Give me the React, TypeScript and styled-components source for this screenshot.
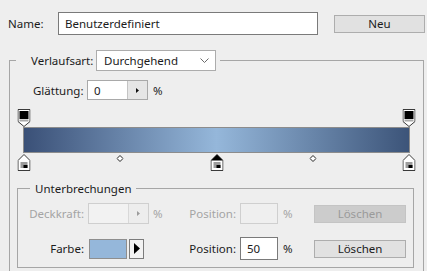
import React from 'react';
import styled, { createGlobalStyle } from 'styled-components';

const GlobalStyle = createGlobalStyle`
  html, body {
    margin: 0;
    padding: 0;
  }
  body {
    width: 427px;
    height: 271px;
    overflow: hidden;
    background: #eeeeee;
    font-family: 'Noto Sans', 'Open Sans', sans-serif;
    font-size: 11.5px;
    color: #1b1b1b;
  }
`;

const opacityStops = [0, 1];
const colorStops = [
  { pos: 0, selected: false },
  { pos: 0.5, selected: true },
  { pos: 1, selected: false },
];
const midpoints = [0.25, 0.75];

const Page = styled.div`
  padding-top: 12px;
`;

const NameRow = styled.div`
  display: flex;
  align-items: center;
  height: 23px;
  padding-left: 8px;
`;

const NameLabel = styled.span`
  width: 50px;
`;

const TextBox = styled.div<{ $width: number; $height?: number; $disabled?: boolean }>`
  box-sizing: border-box;
  display: flex;
  align-items: center;
  width: ${(p) => p.$width}px;
  height: ${(p) => p.$height ?? 23}px;
  padding-left: 6px;
  background: ${(p) => (p.$disabled ? '#efefef' : '#ffffff')};
  border: 1px solid ${(p) => (p.$disabled ? '#cfcfcf' : '#7a7a7a')};
`;

const Button = styled.div<{ $width: number; $disabled?: boolean }>`
  box-sizing: border-box;
  display: flex;
  align-items: center;
  justify-content: center;
  width: ${(p) => p.$width}px;
  height: 18px;
  background: ${(p) => (p.$disabled ? '#cccccc' : '#e1e1e1')};
  border: 1px solid ${(p) => (p.$disabled ? '#c4c4c4' : '#adadad')};
  color: ${(p) => (p.$disabled ? '#9a9a9a' : '#1b1b1b')};
`;

const NewButton = styled(Button)`
  margin-left: 16px;
`;

const OuterGroup = styled.fieldset`
  box-sizing: border-box;
  width: 415px;
  margin: 15px 0 0 9px;
  padding: 0 0 20px 0;
  border: 1px solid #a6a6a6;
`;

const OuterLegend = styled.legend`
  display: flex;
  align-items: center;
  margin-left: 6px;
  padding: 0 4px 0 15px;
`;

const LegendLabel = styled.span`
  width: 65px;
`;

const Select = styled.div`
  box-sizing: border-box;
  display: flex;
  align-items: center;
  justify-content: space-between;
  width: 120px;
  height: 21px;
  padding: 0 6px 0 7px;
  background: #ffffff;
  border: 1px solid #acacac;
`;

const SmoothRow = styled.div`
  display: flex;
  align-items: center;
  height: 20px;
  margin-top: 9px;
  padding-left: 23px;
`;

const SmoothLabel = styled.span`
  width: 54px;
`;

const Spin = styled.div<{ $disabled?: boolean }>`
  box-sizing: border-box;
  display: flex;
  width: 61px;
  height: ${(p) => (p.$disabled ? 21 : 20)}px;
  background: ${(p) => (p.$disabled ? '#f2f2f2' : '#ffffff')};
  border: 1px solid ${(p) => (p.$disabled ? '#cfcfcf' : '#a9a9a9')};
`;

const SpinValue = styled.span`
  display: flex;
  align-items: center;
  flex: 1;
  padding-left: 6px;
`;

const SpinButton = styled.span<{ $disabled?: boolean }>`
  display: flex;
  align-items: center;
  justify-content: center;
  width: 19px;
  background: ${(p) => (p.$disabled ? '#ededed' : '#e6e6e6')};
  border-left: 1px solid ${(p) => (p.$disabled ? '#d8d8d8' : '#c4c4c4')};
  color: ${(p) => (p.$disabled ? '#9c9c9c' : '#111111')};
`;

const Percent = styled.span<{ $disabled?: boolean; $width?: number; $pad?: number }>`
  width: ${(p) => (p.$width ? `${p.$width}px` : 'auto')};
  padding-left: ${(p) => p.$pad ?? 5}px;
  box-sizing: border-box;
  color: ${(p) => (p.$disabled ? '#a4a4a4' : '#1b1b1b')};
`;

const Editor = styled.div`
  margin: 9px 13px 0 13px;
`;

const StopTrack = styled.div<{ $height: number }>`
  position: relative;
  height: ${(p) => p.$height}px;
  margin: 0 1px;
`;

const Marker = styled.div<{ $top?: number }>`
  position: absolute;
  top: ${(p) => p.$top ?? 0}px;
  display: flex;
  transform: translateX(-50%);
`;

const Bar = styled.div`
  box-sizing: border-box;
  height: 26px;
  border: 1px solid #8c8c8c;
  background: linear-gradient(to right, #3a5077 0%, #95b7da 50%, #3c5479 100%);
`;

const InnerGroup = styled.fieldset`
  margin: 10px 9px 0 7px;
  padding: 7px 0 7px 0;
  border: 1px solid #a6a6a6;
`;

const InnerLegend = styled.legend`
  margin-left: 12px;
  padding: 0 5px 0 5px;
`;

const StopRow = styled.div<{ $height: number; $gap?: number }>`
  display: flex;
  align-items: center;
  height: ${(p) => p.$height}px;
  margin-top: ${(p) => p.$gap ?? 0}px;
`;

const RowLabel = styled.span<{ $width: number; $disabled?: boolean }>`
  box-sizing: border-box;
  width: ${(p) => p.$width}px;
  text-align: right;
  padding-right: 4px;
  color: ${(p) => (p.$disabled ? '#a4a4a4' : '#1b1b1b')};
`;

const ControlCell = styled.div`
  display: flex;
  align-items: center;
  width: 61px;
`;

const Swatch = styled.div`
  box-sizing: border-box;
  width: 38px;
  height: 20px;
  margin-left: 1px;
  background: #95b7da;
  border: 1px solid #8e8e8e;
`;

const PickerButton = styled.div`
  box-sizing: border-box;
  display: flex;
  align-items: center;
  justify-content: center;
  width: 15px;
  height: 20px;
  margin-left: 2px;
  background: #f3f3f3;
  border: 1px solid #7c7c7c;
`;

const Chevron = () => (
  <svg width="9" height="5" viewBox="0 0 9 5">
    <path d="M0.5 0.5L4.5 4.5L8.5 0.5" fill="none" stroke="#6a6a6a" strokeWidth="1" />
  </svg>
);

const TinyArrow = ({ color = '#111' }: { color?: string }) => (
  <svg width="3" height="5" viewBox="0 0 3 5">
    <path d="M0 0L3 2.5L0 5Z" fill={color} />
  </svg>
);

const BigArrow = () => (
  <svg width="6" height="11" viewBox="0 0 6 11">
    <path d="M0 0L6 5.5L0 11Z" fill="#000" />
  </svg>
);

const OpacityStop = () => (
  <svg width="13" height="18" viewBox="0 0 13 18">
    <path d="M0.5 0.5H12.5V12.5L6.5 17.5L0.5 12.5Z" fill="#ffffff" stroke="#3a3a3a" />
    <rect x="2" y="2" width="9" height="8" fill="#000" />
    <rect x="2" y="10.5" width="9" height="2" fill="#a9a9a9" />
  </svg>
);

const ColorStop = ({ selected }: { selected: boolean }) => (
  <svg width="13" height="17" viewBox="0 0 13 17">
    <path d="M6.5 0.5L12.5 6.5V16.5H0.5V6.5Z" fill="#ffffff" stroke="#3a3a3a" />
    {selected && <path d="M6.5 0.5L12.5 6.5H0.5Z" fill="#000" />}
    <rect x="3" y="8" width="7" height="6" fill="#9c9c9c" />
    <rect x="6" y="11" width="4" height="3" fill="#000" />
  </svg>
);

const Midpoint = () => (
  <svg width="7" height="7" viewBox="0 0 7 7">
    <path d="M3.5 0.5L6.5 3.5L3.5 6.5L0.5 3.5Z" fill="#ffffff" stroke="#222" />
  </svg>
);

const App = () => {
  return (
    <Page>
      <GlobalStyle />
      <NameRow>
        <NameLabel>Name:</NameLabel>
        <TextBox $width={260}>Benutzerdefiniert</TextBox>
        <NewButton $width={91}>Neu</NewButton>
      </NameRow>

      <OuterGroup>
        <OuterLegend>
          <LegendLabel>Verlaufsart:</LegendLabel>
          <Select>
            <span>Durchgehend</span>
            <Chevron />
          </Select>
        </OuterLegend>

        <SmoothRow>
          <SmoothLabel>Glättung:</SmoothLabel>
          <Spin>
            <SpinValue>0</SpinValue>
            <SpinButton>
              <TinyArrow />
            </SpinButton>
          </Spin>
          <Percent>%</Percent>
        </SmoothRow>

        <Editor>
          <StopTrack $height={18}>
            {opacityStops.map((p) => (
              <Marker key={p} style={{ left: `${p * 100}%` }}>
                <OpacityStop />
              </Marker>
            ))}
          </StopTrack>
          <Bar />
          <StopTrack $height={18}>
            {midpoints.map((p) => (
              <Marker key={`m${p}`} $top={2} style={{ left: `${p * 100}%` }}>
                <Midpoint />
              </Marker>
            ))}
            {colorStops.map((s) => (
              <Marker key={s.pos} $top={1} style={{ left: `${s.pos * 100}%` }}>
                <ColorStop selected={s.selected} />
              </Marker>
            ))}
          </StopTrack>
        </Editor>

        <InnerGroup>
          <InnerLegend>Unterbrechungen</InnerLegend>
          <StopRow $height={21}>
            <RowLabel $width={70} $disabled>
              Deckkraft:
            </RowLabel>
            <ControlCell>
              <Spin $disabled>
                <SpinValue />
                <SpinButton $disabled>
                  <TinyArrow color="#9c9c9c" />
                </SpinButton>
              </Spin>
            </ControlCell>
            <Percent $disabled $width={39} $pad={4}>
              %
            </Percent>
            <RowLabel $width={52} $disabled>
              Position:
            </RowLabel>
            <TextBox $width={38} $height={21} $disabled />
            <Percent $disabled $width={36} $pad={5}>
              %
            </Percent>
            <Button $width={92} $disabled>
              Löschen
            </Button>
          </StopRow>
          <StopRow $height={23} $gap={13}>
            <RowLabel $width={70}>Farbe:</RowLabel>
            <ControlCell>
              <Swatch />
              <PickerButton>
                <BigArrow />
              </PickerButton>
            </ControlCell>
            <Percent $width={39} $pad={4} />
            <RowLabel $width={52}>Position:</RowLabel>
            <TextBox $width={38}>50</TextBox>
            <Percent $width={36} $pad={5}>
              %
            </Percent>
            <Button $width={92}>Löschen</Button>
          </StopRow>
        </InnerGroup>
      </OuterGroup>
    </Page>
  );
};

export default App;
